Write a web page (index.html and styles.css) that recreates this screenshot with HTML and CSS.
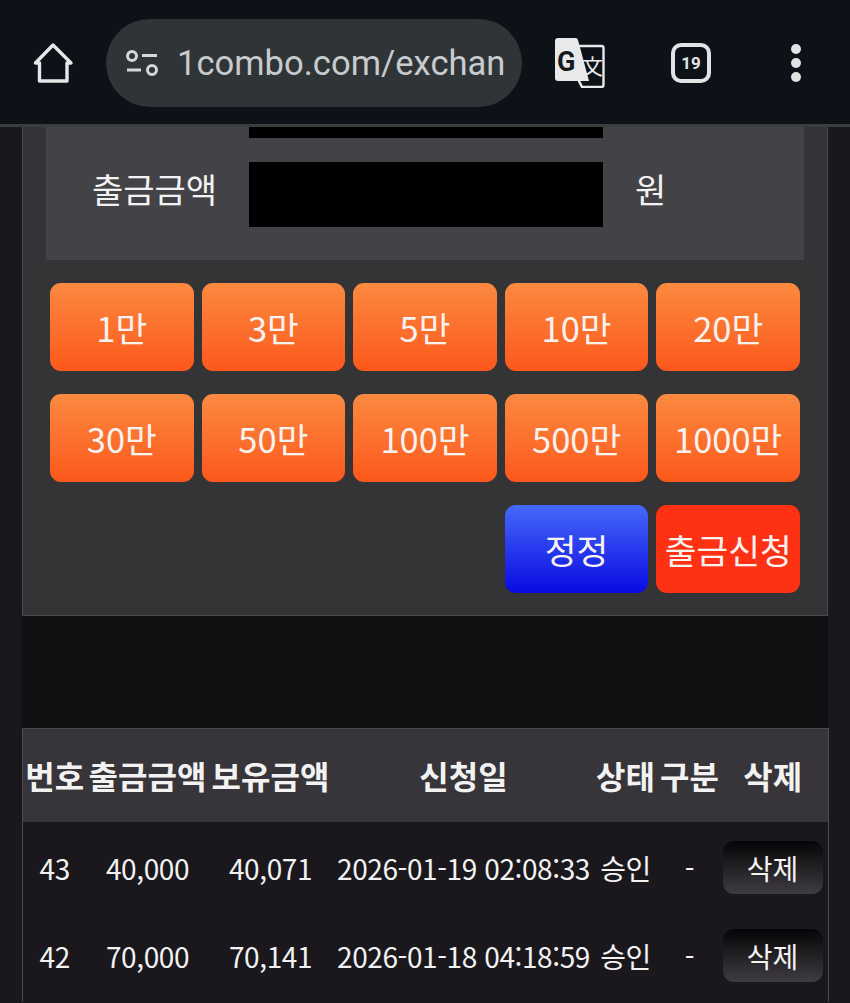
FILE: index.html
```html
<!DOCTYPE html>
<html lang="ko">
<head>
<meta charset="utf-8">
<title>출금신청</title>
<link rel="stylesheet" href="styles.css">
</head>
<body>
<header class="toolbar">
  <svg class="ico-home" viewBox="0 0 44 44" width="44" height="44"><path d="M22 4 4.500 22H8.500V40H36V22H40z" fill="none" stroke="#e6e7e9" stroke-width="3.4" stroke-linejoin="round"/></svg>
  <div class="pill">
    <svg class="ico-tune" viewBox="0 0 34 30" width="34" height="30"><g fill="none" stroke="#d4d6d8" stroke-width="3"><circle cx="7" cy="8" r="4.500"/><circle cx="27" cy="22" r="4.500"/><path d="M17 7.500h15M2 22h14"/></g></svg>
    <div class="url">1combo.com/exchan</div>
  </div>
  <svg class="ico-translate" viewBox="0 0 50 50" width="50" height="50">
    <path d="M18 8h28.500a2 2 0 0 1 2 2v37a2 2 0 0 1-2 2H27l-3-6z" fill="#0d1218" stroke="#e8e9eb" stroke-width="2.400"/>
    <path d="M3 0h17a3 3 0 0 1 3 2l11 41H3a3 3 0 0 1-3-3V3a3 3 0 0 1 3-3z" fill="#e8e9eb"/>
    <text x="2" y="33" class="g">G</text>
    <text x="27" y="36" class="wen">文</text>
  </svg>
  <div class="tabs">19</div>
  <div class="dots"><i></i><i></i><i></i></div>
</header>

<main class="page">
  <section class="panel">
    <div class="form">
      <div class="cut"></div>
      <div class="field">
        <span class="label">출금금액</span>
        <div class="mask"></div>
        <span class="unit">원</span>
      </div>
    </div>
    <div class="keys">
      <button class="key">1만</button>
      <button class="key">3만</button>
      <button class="key">5만</button>
      <button class="key">10만</button>
      <button class="key">20만</button>
      <button class="key">30만</button>
      <button class="key">50만</button>
      <button class="key">100만</button>
      <button class="key">500만</button>
      <button class="key">1000만</button>
      <button class="key reset">정정</button>
      <button class="key submit">출금신청</button>
    </div>
  </section>

  <div class="spacer"></div>

  <table class="history">
    <colgroup>
      <col class="c1"><col class="c2"><col class="c3"><col class="c4"><col class="c5"><col class="c6"><col class="c7">
    </colgroup>
    <thead>
      <tr><th>번호</th><th>출금금액</th><th>보유금액</th><th>신청일</th><th>상태</th><th>구분</th><th>삭제</th></tr>
    </thead>
    <tbody>
      <tr><td>43</td><td>40,000</td><td>40,071</td><td>2026-01-19 02:08:33</td><td>승인</td><td>-</td><td><button class="del">삭제</button></td></tr>
      <tr><td>42</td><td>70,000</td><td>70,141</td><td>2026-01-18 04:18:59</td><td>승인</td><td>-</td><td><button class="del">삭제</button></td></tr>
    </tbody>
  </table>
</main>
</body>
</html>
```
FILE: styles.css
```css
* { box-sizing: border-box; }
html, body { margin: 0; height: 1003px; overflow: hidden; }
body {
  background: #1a181c;
  color: #f2f2f2;
  font-family: "Noto Sans CJK KR", "Noto Sans", sans-serif;
}
button { font-family: inherit; border: 0; padding: 0; color: #f5f2ef; }

.toolbar {
  height: 127px;
  background: #0d1218;
  border-bottom: 3px solid #3b3e41;
  display: flex;
  align-items: center;
  padding: 2px 0 0 31px;
}
.ico-home { flex: none; }
.pill {
  width: 416px;
  height: 88px;
  margin-left: 31px;
  background: #2f3437;
  border-radius: 44px;
  display: flex;
  align-items: center;
  padding: 0 17px 0 19px;
  flex: none;
}
.ico-tune { flex: none; }
.url {
  margin-left: 18px;
  font: 34.600px Roboto, sans-serif;
  color: #c8cbce;
  white-space: nowrap;
  flex: 1;
}
.ico-translate { flex: none; margin-left: 33px; }
.g { font: 700 27px Roboto, sans-serif; fill: #17191c; }
.wen { font: 400 21px "Noto Sans CJK SC", sans-serif; fill: #e8e9eb; }
.tabs {
  flex: none;
  margin-left: 66px;
  width: 40px;
  height: 40px;
  border: 4px solid #e2e3e5;
  border-radius: 10px;
  color: #e2e3e5;
  font: 700 17px Roboto, sans-serif;
  display: flex;
  align-items: center;
  justify-content: center;
}
.dots {
  flex: none;
  margin-left: 80px;
  display: flex;
  flex-direction: column;
  gap: 4px;
}
.dots i { width: 10px; height: 10px; border-radius: 50%; background: #e2e3e5; }

.page { margin: 0 22px; }
.panel {
  background: #343336;
  border: 1px solid #4b4a4d;
  border-top: 0;
  height: 489px;
  padding: 0 23px;
}
.form { height: 133px; background: #434246; }
.cut { margin-left: 203px; width: 354px; height: 11px; background: #000; }
.field { display: flex; align-items: center; margin-top: 24px; }
.label { width: 203px; padding: 0 0 12px 46px; font-size: 34px; line-height: 53px; white-space: nowrap; }
.mask { width: 354px; height: 65px; background: #000; }
.unit { margin-left: 32px; padding-bottom: 12px; font-size: 34px; line-height: 53px; }
.keys {
  display: grid;
  grid-template-columns: repeat(5, 1fr);
  grid-auto-rows: 88px;
  gap: 23px 8px;
  margin: 23px 4px 0;
}
.key {
  border-radius: 11px;
  background: linear-gradient(#fb8a40, #fc581b);
  font-size: 34.500px;
}
.reset { grid-column: 4; background: linear-gradient(#4669f9, #0a0ae2); }
.submit { background: #fe3114; white-space: nowrap; }

.spacer { height: 112px; background: #111013; }

.history {
  width: 806px;
  border-collapse: collapse;
  table-layout: fixed;
  border-left: 1px solid #4b4a4d;
  border-right: 1px solid #4b4a4d;
}
.c1 { width: 64px; }
.c2 { width: 122px; }
.c3 { width: 124px; }
.c4 { width: 262px; }
.c5 { width: 62px; }
.c6 { width: 66px; }
.c7 { width: 106px; }
th {
  height: 93px;
  background: #373539;
  border-top: 1px solid #4b4a4d;
  font-size: 32px;
  font-weight: 700;
  padding: 0;
  white-space: nowrap;
}
.history th:last-child { padding-right: 5px; }
td {
  height: 88px;
  padding: 0;
  text-align: center;
  font-size: 28px;
  white-space: nowrap;
  letter-spacing: -.4px;
}
tbody tr:first-child td { height: 92px; }
tbody tr + tr td { padding-bottom: 4px; }
.del {
  display: block;
  width: 100px;
  height: 53px;
  border-radius: 11px;
  background: linear-gradient(#050406, #3f3d41);
  font-size: 28px;
}
```
